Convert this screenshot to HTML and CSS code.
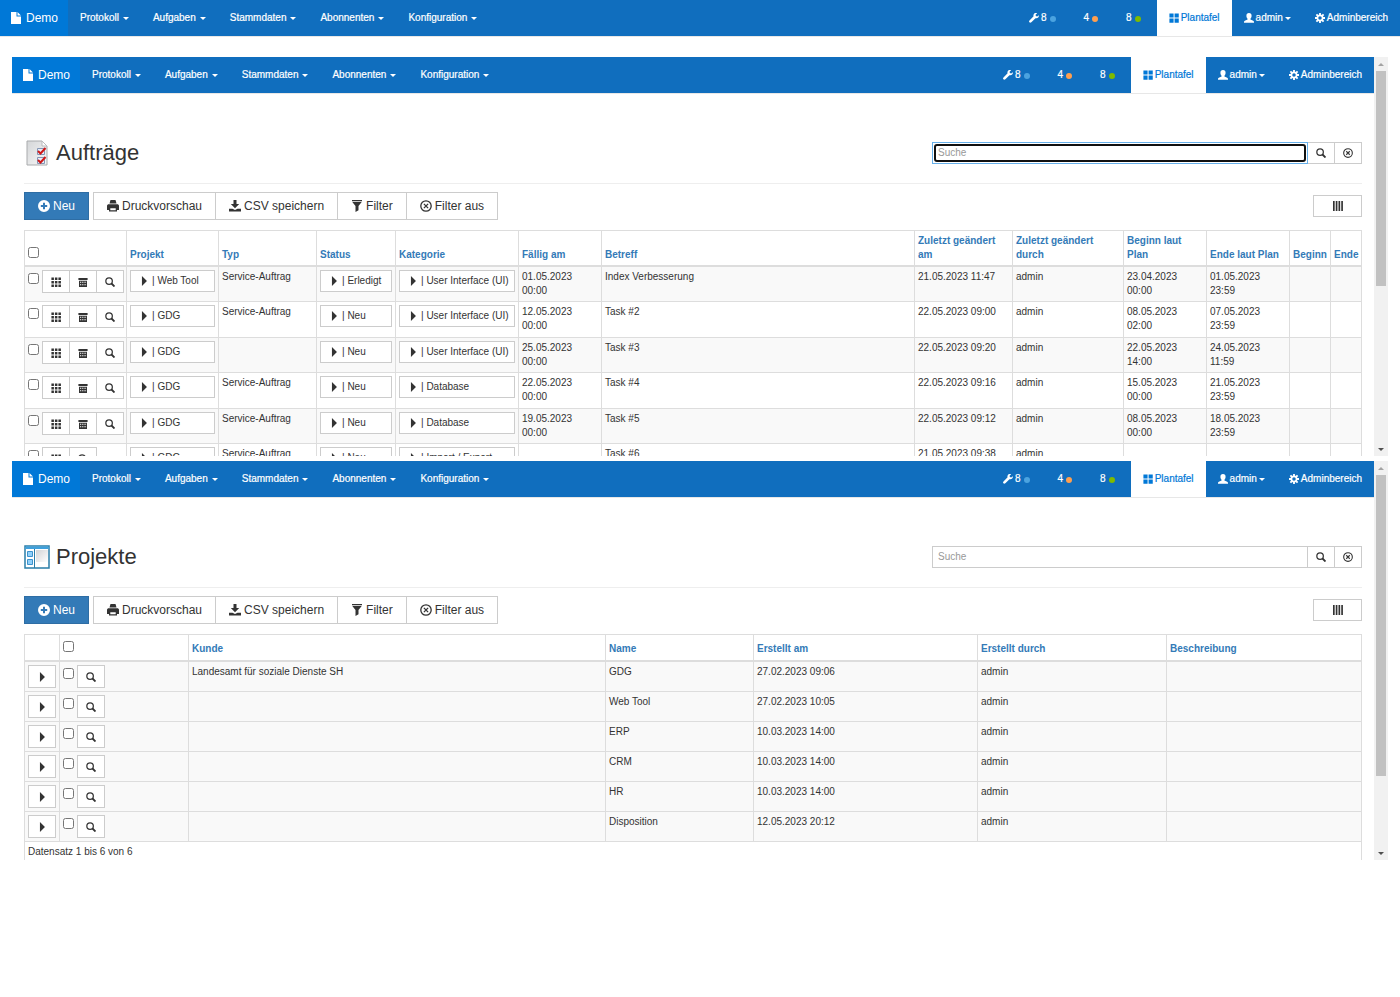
FILE: index.html
```html
<!DOCTYPE html>
<html lang="de">
<head>
    <meta charset="UTF-8">
    <meta name="viewport" content="width=device-width, initial-scale=1.0">
    <title>Demo</title>
    <link rel="stylesheet" href="styles.css">
</head>
<body>
    <svg class="sprite" aria-hidden="true">
        <symbol id="i-file" viewBox="0 0 12 12"><path d="M1 0h5.500v4.500H11V12H1zM7.500 0L11 3.500H7.500z"/></symbol>
        <symbol id="i-wrench" viewBox="0 0 12 12"><path d="M11.800 2.600l-2 1.600-1.600-.5-.3-1.500L9.800.4C8.200-.2 6.300.2 5.600 1.700c-.4.8-.4 1.500-.1 2.300L.6 8.900c-.7.7-.7 1.600-.1 2.300s1.600.7 2.300 0l5-4.900c2.600.6 4.500-1.300 4-3.700z"/></symbol>
        <symbol id="i-large" viewBox="0 0 12 12"><path d="M.5.5h5v5h-5zM6.700.5h5v5h-5zM.5 6.700h5v5h-5zM6.700 6.700h5v5h-5z"/></symbol>
        <symbol id="i-user" viewBox="0 0 12 12"><path d="M6 0c2.100 0 3.100 1.400 3.100 3.200 0 1.600-.6 2.900-1.400 3.600v1l3.300 1.500c.7.300 1 .8 1 1.500v1H0v-1c0-.7.3-1.200 1-1.500l3.300-1.500v-1C3.500 6.100 2.900 4.800 2.900 3.200 2.900 1.400 3.900 0 6 0z"/></symbol>
        <symbol id="i-cog" viewBox="0 0 12 12"><circle cx="6" cy="6" r="3.100" fill="none" stroke="currentColor" stroke-width="2"/><path d="M4.900 0h2.200v2.500H4.900zM4.900 9.500h2.200V12H4.900zM0 4.900h2.500v2.200H0zM9.500 4.900H12v2.200H9.500zM.9 2.500L2.500.9l1.700 1.700-1.600 1.600zM7.800 9.400l1.600-1.600 1.700 1.700-1.600 1.600zM.9 9.500l1.700-1.700 1.600 1.600-1.700 1.700zM7.800 2.600L9.500.9l1.600 1.600-1.700 1.700z"/></symbol>
        <symbol id="i-plus" viewBox="0 0 12 12"><path fill-rule="evenodd" d="M6 0a6 6 0 110 12A6 6 0 016 0zM5 2.800V5H2.800v2H5v2.200h2V7h2.200V5H7V2.800z"/></symbol>
        <symbol id="i-print" viewBox="0 0 12 12"><path fill-rule="evenodd" d="M3.500 0h5l1 3.500h-7zM1 4.300h10l1 1.200V10h-2v1.500H2V10H0V5.500zM3.300 8.300v1.900h5.400V8.300z"/></symbol>
        <symbol id="i-save" viewBox="0 0 12 12"><path d="M4.500 0h3v4h2.700L6 8.300 1.800 4h2.700zM0 8.700h3.500L6 10l2.500-1.300H12v2.800H0z"/></symbol>
        <symbol id="i-filter" viewBox="0 0 12 12"><path d="M1 0h10v1.200H1zM1.300 2h9.400L7.500 6v4.200L4.500 12V6z"/></symbol>
        <symbol id="i-remove" viewBox="0 0 12 12"><g fill="none" stroke="currentColor" stroke-width="1.300"><circle cx="6" cy="6" r="5.200"/><path d="M3.900 3.900l4.200 4.200M8.100 3.900L3.900 8.100"/></g></symbol>
        <symbol id="i-search" viewBox="0 0 12 12"><g fill="none" stroke="currentColor"><circle cx="4.900" cy="4.900" r="3.900" stroke-width="1.500"/><path d="M7.800 7.800l3.600 3.600" stroke-width="2.200"/></g></symbol>
        <symbol id="i-bars" viewBox="0 0 12 12"><path d="M0 0h2v12H0zM3.300 0h2v12h-2zM6.600 0h2v12h-2zM9.900 0h2v12h-2z"/></symbol>
        <symbol id="i-grid" viewBox="0 0 12 12"><path d="M.5.5h3v3h-3zM4.700.5h3v3h-3zM8.900.5h3v3h-3zM.5 4.700h3v3h-3zM4.700 4.700h3v3h-3zM8.900 4.700h3v3h-3zM.5 8.900h3v3h-3zM4.700 8.900h3v3h-3zM8.900 8.900h3v3h-3z"/></symbol>
        <symbol id="i-calendar" viewBox="0 0 12 12"><path fill-rule="evenodd" d="M.5 1.200h11v2.400H.5zM1.200 4.500h9.600V12H1.200zM2.400 5.700v1.200h1.300V5.700zM4.600 5.700v1.200h1.200V5.700zM6.700 5.700v1.200h1.200V5.700zM8.700 5.700v1.200h1V5.700zM2.400 8.700v1.200h1.300V8.700zM4.600 8.700v1.200h1.200V8.700zM6.700 8.700v1.200h1.200V8.700zM8.700 8.700v1.200h1V8.700z"/></symbol>
        <symbol id="i-play" viewBox="0 0 12 12"><path d="M3.500 0L9.500 6l-6 6z"/></symbol>
    </svg>

    <template id="nav-template">
        <nav class="navbar">
            <a class="brand" href="#"><svg class="icon"><use href="#i-file"/></svg>Demo</a>
            <a class="nav-link" href="#">Protokoll <span class="caret"></span></a>
            <a class="nav-link" href="#">Aufgaben <span class="caret"></span></a>
            <a class="nav-link" href="#">Stammdaten <span class="caret"></span></a>
            <a class="nav-link" href="#">Abonnenten <span class="caret"></span></a>
            <a class="nav-link" href="#">Konfiguration <span class="caret"></span></a>
            <div class="nav-right">
                <a class="nav-link" href="#"><svg class="icon"><use href="#i-wrench"/></svg>8<span class="dot blue"></span></a>
                <a class="nav-link" href="#">4<span class="dot orange"></span></a>
                <a class="nav-link" href="#">8<span class="dot green"></span></a>
                <a class="nav-link active" href="#"><svg class="icon"><use href="#i-large"/></svg>Plantafel</a>
                <a class="nav-link" href="#"><svg class="icon"><use href="#i-user"/></svg>admin<span class="caret tight"></span></a>
                <a class="nav-link" href="#"><svg class="icon"><use href="#i-cog"/></svg>Adminbereich</a>
            </div>
        </nav>
    </template>

    <template id="toolbar-template">
        <div class="toolbar">
            <button class="btn btn-primary"><svg class="icon"><use href="#i-plus"/></svg>Neu</button>
            <div class="btn-group">
                <button class="btn"><svg class="icon"><use href="#i-print"/></svg>Druckvorschau</button>
                <button class="btn"><svg class="icon"><use href="#i-save"/></svg>CSV speichern</button>
                <button class="btn"><svg class="icon"><use href="#i-filter"/></svg>Filter</button>
                <button class="btn"><svg class="icon"><use href="#i-remove"/></svg>Filter aus</button>
            </div>
            <button class="btn-columns" aria-label="Spalten"><svg class="icon"><use href="#i-bars"/></svg></button>
        </div>
    </template>

    <div data-include="nav-template"></div>

    <main class="dashboard">
        <section class="pane">
            <div class="pane-body">
                <div data-include="nav-template"></div>
                <div class="content">
                    <header class="page-header">
                        <svg class="page-icon" viewBox="0 0 26 26">
                            <defs><linearGradient id="paper" x1="0" y1="0" x2="1" y2="1"><stop offset="0" stop-color="#d4d6d8"/><stop offset="1" stop-color="#f8f8f8"/></linearGradient></defs>
                            <path d="M3 1h15l5 5v19H3z" fill="url(#paper)" stroke="#a9abad"/>
                            <path d="M18 1v5h5z" fill="#fff" stroke="#b9bbbd"/>
                            <path d="M13.500 8.500h7v6h-7zM13.500 17.500h7v6h-7z" fill="#e8eef8" stroke="#8496b6"/>
                            <path d="M14 11l2.500 2.500 5-5.500M14 20l2.500 2.500 5-5.500" fill="none" stroke="#d01818" stroke-width="2"/>
                        </svg>
                        <h1>Aufträge</h1>
                        <form class="search">
                            <div class="search-field focused"><input type="text" placeholder="Suche" aria-label="Suche"></div>
                            <button type="button" aria-label="Suchen"><svg class="icon"><use href="#i-search"/></svg></button>
                            <button type="button" aria-label="Suche leeren"><svg class="icon"><use href="#i-remove"/></svg></button>
                        </form>
                    </header>
                    <div data-include="toolbar-template"></div>
                    <table class="grid orders">
                        <colgroup>
                            <col class="w-actions"><col class="w-project"><col class="w-date"><col class="w-status"><col class="w-category"><col class="w-plan"><col><col class="w-date"><col class="w-user"><col class="w-plan"><col class="w-plan"><col class="w-begin"><col class="w-end">
                        </colgroup>
                        <thead>
                            <tr>
                                <th><input type="checkbox" aria-label="Alle auswählen"></th>
                                <th>Projekt</th>
                                <th>Typ</th>
                                <th>Status</th>
                                <th>Kategorie</th>
                                <th>Fällig am</th>
                                <th>Betreff</th>
                                <th>Zuletzt geändert am</th>
                                <th>Zuletzt geändert durch</th>
                                <th>Beginn laut Plan</th>
                                <th>Ende laut Plan</th>
                                <th>Beginn</th>
                                <th>Ende</th>
                            </tr>
                        </thead>
                        <tbody id="orders"></tbody>
                    </table>
                </div>
            </div>
            <div class="scrollbar" aria-hidden="true"><span class="arrow up"></span><span class="track"><span class="thumb" style="height: 58%"></span></span><span class="arrow down"></span></div>
        </section>

        <section class="pane">
            <div class="pane-body">
                <div data-include="nav-template"></div>
                <div class="content">
                    <header class="page-header">
                        <svg class="page-icon" viewBox="0 0 26 26">
                            <defs><linearGradient id="sheet" x1="0" y1="0" x2="1" y2="1"><stop offset="0" stop-color="#d2d4d6"/><stop offset="1" stop-color="#fff"/></linearGradient></defs>
                            <path d="M1 2h24v22H1z" fill="#fff" stroke="#2a7ea8" stroke-width="1.500"/>
                            <path d="M1.500 2.500h23V5h-23z" fill="#3fa0dc"/>
                            <path d="M12 6h12v12H12z" fill="url(#sheet)"/>
                            <path d="M10.500 5v19" stroke="#2a7ea8"/>
                            <path d="M3.500 7.500h5v5h-5zM3.500 15.500h5v5h-5z" fill="#8fd0fa" stroke="#3d92cc"/>
                        </svg>
                        <h1>Projekte</h1>
                        <form class="search">
                            <div class="search-field"><input type="text" placeholder="Suche" aria-label="Suche"></div>
                            <button type="button" aria-label="Suchen"><svg class="icon"><use href="#i-search"/></svg></button>
                            <button type="button" aria-label="Suche leeren"><svg class="icon"><use href="#i-remove"/></svg></button>
                        </form>
                    </header>
                    <div data-include="toolbar-template"></div>
                    <table class="grid projects">
                        <colgroup>
                            <col class="w-expand"><col class="w-select"><col><col class="w-name"><col class="w-created"><col class="w-creator"><col class="w-description">
                        </colgroup>
                        <thead>
                            <tr>
                                <th></th>
                                <th><input type="checkbox" aria-label="Alle auswählen"></th>
                                <th>Kunde</th>
                                <th>Name</th>
                                <th>Erstellt am</th>
                                <th>Erstellt durch</th>
                                <th>Beschreibung</th>
                            </tr>
                        </thead>
                        <tbody id="projects"></tbody>
                        <tfoot>
                            <tr><td colspan="7">Datensatz 1 bis 6 von 6</td></tr>
                        </tfoot>
                    </table>
                </div>
            </div>
            <div class="scrollbar" aria-hidden="true"><span class="arrow up"></span><span class="track"><span class="thumb" style="height: 81%"></span></span><span class="arrow down"></span></div>
        </section>
    </main>

    <script>
        const orders = [
            ['Web Tool', 'Service-Auftrag', 'Erledigt', 'User Interface (UI)', '01.05.2023 00:00', 'Index Verbesserung', '21.05.2023 11:47', '23.04.2023 00:00', '01.05.2023 23:59'],
            ['GDG', 'Service-Auftrag', 'Neu', 'User Interface (UI)', '12.05.2023 00:00', 'Task #2', '22.05.2023 09:00', '08.05.2023 02:00', '07.05.2023 23:59'],
            ['GDG', '', 'Neu', 'User Interface (UI)', '25.05.2023 00:00', 'Task #3', '22.05.2023 09:20', '22.05.2023 14:00', '24.05.2023 11:59'],
            ['GDG', 'Service-Auftrag', 'Neu', 'Database', '22.05.2023 00:00', 'Task #4', '22.05.2023 09:16', '15.05.2023 00:00', '21.05.2023 23:59'],
            ['GDG', 'Service-Auftrag', 'Neu', 'Database', '19.05.2023 00:00', 'Task #5', '22.05.2023 09:12', '08.05.2023 00:00', '18.05.2023 23:59'],
            ['GDG', 'Service-Auftrag', 'Neu', 'Import / Export', '', 'Task #6', '21.05.2023 09:38', '', '']
        ];
        const projects = [
            ['Landesamt für soziale Dienste SH', 'GDG', '27.02.2023 09:06'],
            ['', 'Web Tool', '27.02.2023 10:05'],
            ['', 'ERP', '10.03.2023 14:00'],
            ['', 'CRM', '10.03.2023 14:00'],
            ['', 'HR', '10.03.2023 14:00'],
            ['', 'Disposition', '12.05.2023 20:12']
        ];

        const icon = name => `<svg class="icon"><use href="#i-${name}"/></svg>`;
        const iconButton = (name, label) => `<button aria-label="${label}">${icon(name)}</button>`;
        const refButton = text => `<button class="ref">${icon('play')}<span>| ${text}</span></button>`;
        const checkbox = '<input type="checkbox" aria-label="Auswählen">';

        document.querySelectorAll('[data-include]').forEach(el => {
            el.replaceWith(document.getElementById(el.dataset.include).content.cloneNode(true));
        });

        document.getElementById('orders').innerHTML = orders.map(o => `
            <tr>
                <td><div class="actions">${checkbox}<div class="icon-group">
                    ${iconButton('grid', 'Plantafel')}${o[4] ? iconButton('calendar', 'Kalender') : ''}${iconButton('search', 'Anzeigen')}
                </div></div></td>
                <td>${refButton(o[0])}</td>
                <td>${o[1]}</td>
                <td>${refButton(o[2])}</td>
                <td>${refButton(o[3])}</td>
                <td>${o[4]}</td>
                <td>${o[5]}</td>
                <td>${o[6]}</td>
                <td>admin</td>
                <td>${o[7]}</td>
                <td>${o[8]}</td>
                <td></td>
                <td></td>
            </tr>`).join('');

        document.getElementById('projects').innerHTML = projects.map(p => `
            <tr>
                <td><div class="icon-group">${iconButton('play', 'Aufklappen')}</div></td>
                <td><div class="actions">${checkbox}<div class="icon-group">${iconButton('search', 'Anzeigen')}</div></div></td>
                <td>${p[0]}</td>
                <td>${p[1]}</td>
                <td>${p[2]}</td>
                <td>admin</td>
                <td></td>
            </tr>`).join('');
    </script>
</body>
</html>
```

FILE: styles.css
```css
* {
    box-sizing: border-box;
}
body {
    margin: 0;
    font-family: "Liberation Sans", Arial, sans-serif;
    font-size: 10px;
    line-height: 14px;
    color: #333;
    background-color: #fff;
}
button, input {
    font-family: inherit;
    font-size: inherit;
    line-height: inherit;
    color: inherit;
}
button {
    cursor: pointer;
}
.sprite {
    display: none;
}
.icon {
    width: 10px;
    height: 10px;
    fill: currentColor;
    flex: none;
}

/* navbar */
.navbar {
    display: flex;
    height: 37px;
    background-color: #106ebe;
    background-clip: padding-box;
    border-bottom: 1px solid #e7e7e7;
}
.navbar a {
    display: flex;
    align-items: center;
    color: #fff;
    text-decoration: none;
}
.brand {
    gap: 4px;
    padding: 0 10px;
    font-size: 12px;
    background-color: #0078d7;
}
.brand .icon {
    width: 12px;
    height: 12px;
}
.nav-link {
    padding: 0 12px;
    -webkit-text-stroke: 0.2px;
}
.nav-link .icon {
    margin-right: 2px;
}
.navbar .active {
    color: #0078d7;
    background-color: #fff;
}
.nav-right {
    display: flex;
    margin-left: auto;
}
.caret {
    margin-left: 4px;
    border: 3px solid transparent;
    border-top-color: currentColor;
    border-bottom: 0;
}
.caret.tight {
    margin-left: 2px;
}
.dot {
    width: 6px;
    height: 6px;
    margin: 2px 4px 0 3px;
    border-radius: 50%;
}
.dot.blue {
    background-color: #4ba3e0;
}
.dot.orange {
    background-color: #ff9f4f;
}
.dot.green {
    background-color: #7fba00;
}

/* panes */
.dashboard {
    display: flex;
    flex-direction: column;
    gap: 5px;
    padding: 20px 12px;
}
.pane {
    display: flex;
    height: 399px;
    overflow: hidden;
}
.pane-body {
    flex: 1;
    min-width: 0;
}
.content {
    padding: 0 12px;
}
.scrollbar {
    display: flex;
    flex-direction: column;
    align-items: center;
    width: 14px;
    background-color: #f1f1f1;
}
.arrow {
    display: flex;
    align-items: center;
    height: 14px;
}
.arrow::before {
    content: "";
    border: 3px solid transparent;
}
.arrow.up::before {
    border-top: 0;
    border-bottom-color: #a3a3a3;
}
.arrow.down::before {
    border-bottom: 0;
    border-top-color: #505050;
}
.track {
    flex: 1;
    width: 10px;
}
.thumb {
    display: block;
    background-color: #c1c1c1;
}

/* page header */
.page-header {
    display: flex;
    align-items: center;
    padding: 46px 0 17px;
    border-bottom: 1px solid #eee;
}
.page-icon {
    width: 26px;
    height: 26px;
    margin-right: 6px;
}
h1 {
    margin: 0;
    font-size: 22px;
    line-height: 26px;
    font-weight: normal;
}
.search {
    display: flex;
    width: 430px;
    height: 22px;
    margin-left: auto;
}
.search-field {
    display: flex;
    flex: 1;
    border: 1px solid #ccc;
}
.search-field input {
    flex: 1;
    min-width: 0;
    padding: 0 5px;
    border: 0;
    outline: 0;
}
.search-field.focused {
    padding: 1px;
    border-color: #66afe9;
}
.search-field.focused input {
    padding: 0 2px;
    border: 2px solid #101010;
    border-radius: 3px;
}
.search-field input::placeholder {
    color: #999;
}
.search button {
    display: flex;
    align-items: center;
    justify-content: center;
    width: 27px;
    padding: 0;
    background-color: #fff;
    border: 1px solid #ccc;
    border-left: 0;
}

/* toolbar */
.toolbar {
    display: flex;
    align-items: center;
    gap: 4px;
    padding: 8px 0 10px;
}
.btn {
    display: flex;
    align-items: center;
    gap: 3px;
    height: 28px;
    padding: 0 13px;
    font-size: 12px;
    background-color: #fff;
    border: 1px solid #ccc;
}
.btn .icon {
    width: 12px;
    height: 12px;
}
.btn-primary {
    color: #fff;
    background-color: #337ab7;
    border-color: #2e6da4;
}
.btn-group, .icon-group {
    display: flex;
}
.btn-group .btn + .btn {
    margin-left: -1px;
}
.btn-columns {
    display: flex;
    align-items: center;
    justify-content: center;
    width: 49px;
    height: 22px;
    margin-left: auto;
    background-color: #fff;
    border: 1px solid #ccc;
}

/* tables */
.grid {
    width: 100%;
    table-layout: fixed;
    border-collapse: collapse;
}
.grid th, .grid td {
    padding: 3px;
    border: 1px solid #ddd;
    text-align: left;
    vertical-align: top;
}
.grid th {
    border-bottom-width: 2px;
    color: #337ab7;
    vertical-align: bottom;
}
.grid tbody tr {
    background-color: #f9f9f9;
}
.orders tbody tr {
    height: 35px;
}
.orders tbody tr:nth-child(even) {
    height: 36px;
    background-color: #fff;
}
.projects th {
    height: 26px;
    padding-bottom: 4px;
}
.projects tfoot td {
    height: 40px;
}
.grid input {
    display: block;
    width: 11px;
    height: 11px;
    margin: 3px;
    margin-left: 0;
}
.grid th input {
    margin-bottom: 4px;
}
.actions {
    display: flex;
    align-items: flex-start;
}
.icon-group button {
    display: flex;
    align-items: center;
    justify-content: center;
    width: 28px;
    height: 23px;
    padding: 0;
    background-color: #fff;
    border: 1px solid #ccc;
}
.icon-group button + button {
    margin-left: -1px;
}
.ref {
    display: flex;
    align-items: center;
    gap: 3px;
    width: 100%;
    height: 22px;
    padding: 0 8px;
    white-space: nowrap;
    background-color: #fff;
    border: 1px solid #ccc;
}
.w-actions { width: 102px; }
.w-project { width: 92px; }
.w-date { width: 98px; }
.w-status { width: 79px; }
.w-category { width: 123px; }
.w-plan { width: 83px; }
.w-user { width: 111px; }
.w-begin { width: 41px; }
.w-end { width: 31px; }
.w-expand { width: 35px; }
.w-select { width: 129px; }
.w-name { width: 148px; }
.w-created { width: 224px; }
.w-creator { width: 189px; }
.w-description { width: 195px; }
```
